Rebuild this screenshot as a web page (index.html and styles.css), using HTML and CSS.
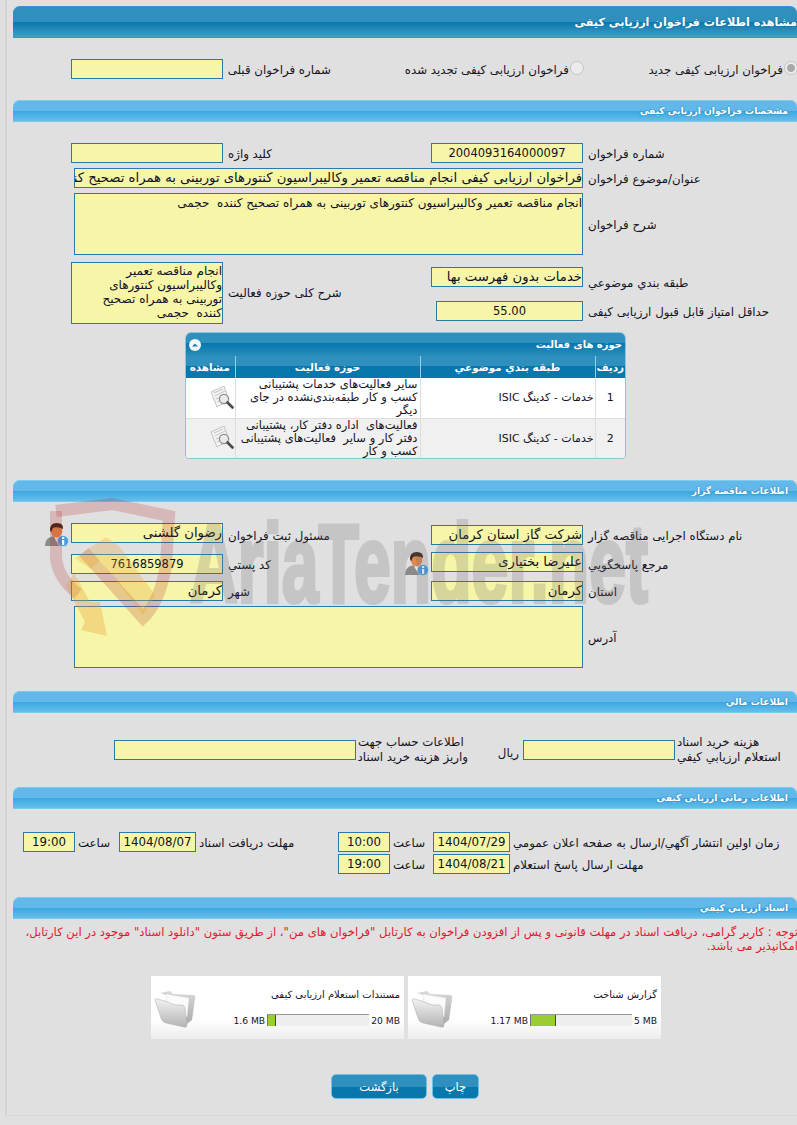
FILE: index.html
```html
<!DOCTYPE html>
<html lang="fa" dir="rtl">
<head>
<meta charset="utf-8">
<title>مشاهده اطلاعات فراخوان ارزیابی کیفی</title>
<link rel="stylesheet" href="styles.css">
</head>
<body>
<svg class="defs" width="0" height="0" aria-hidden="true">
  <defs>
    <linearGradient id="fg" x1="0" y1="0" x2="0" y2="1"><stop offset="0" stop-color="#f2f2f2"/><stop offset="1" stop-color="#b4b4b4"/></linearGradient>
    <linearGradient id="fb" x1="0" y1="0" x2="0" y2="1"><stop offset="0" stop-color="#d8d8d8"/><stop offset="1" stop-color="#a8a8a8"/></linearGradient>
    <symbol id="folder" viewBox="0 0 42 38">
      <path d="M6 3 L16 1 L19 4 L39 5 Q42 5 41 9 L38 30 L30 36 L26 10 Z" fill="url(#fb)"/>
      <path d="M12 4 L35 8 L33 27 L14 24 Z" fill="#fbfbfb" stroke="#ddd" stroke-width=".5"/>
      <path d="M1 10 Q1 8 4 9 L14 12 Q17 14 22 15 L28 15 Q30 15 31 18 L33 35 Q33 38 30 37 L12 33 Q8 32 7 28 Z" fill="url(#fg)" stroke="#aaa" stroke-width=".5"/>
    </symbol>
    <symbol id="doc-search" viewBox="0 0 24 24">
      <path d="M1 6 L14 0 L19 14 L7 21 Z" fill="#f3f3f3" stroke="#b5b5b5" stroke-width=".8"/>
      <path d="M4 7 L13 3 M5 10 L15 5 M6 13 L11 11 M7 16 L11 14" stroke="#c4c4c4" stroke-width="1"/>
      <circle cx="14" cy="13" r="4.6" fill="#e6e9e6" fill-opacity=".8" stroke="#8b8b8b" stroke-width="1.2"/>
      <path d="M17.5 16.5 L22.5 21.5" stroke="#4a4a4a" stroke-width="2.6" stroke-linecap="round"/>
    </symbol>
    <symbol id="person" viewBox="0 0 24 24">
      <path d="M0 23 Q0 15 7 13.5 L17 13.5 Q22 15 22 23 Z" fill="#8a8a8a"/>
      <path d="M9 13.5 L11.5 19 L14 13.5 Z" fill="#f2f2f2"/>
      <ellipse cx="11.5" cy="8" rx="5.8" ry="6.4" fill="#e08a50"/>
      <path d="M5.2 8 Q4.2 0 12 0 Q18.5 0 18 6 Q14 3.5 9 4.5 Q7 5 6.5 9 Z" fill="#3b2a20"/>
      <circle cx="18" cy="18" r="5.6" fill="#4a9ee0" stroke="#cfe6f7" stroke-width=".8"/>
      <rect x="17" y="17" width="2.2" height="5" fill="#fff"/>
      <rect x="17" y="14" width="2.2" height="2" fill="#fff"/>
    </symbol>
  </defs>
</svg>

<div class="page">
  <h1 class="bar bar-main">مشاهده اطلاعات فراخوان ارزیابی کیفی</h1>

  <div class="row row-radios">
    <div class="radio-item"><span class="radio radio-on"></span><span class="radio-text">فراخوان ارزیابی کیفی جدید</span></div>
    <div class="radio-item"><span class="radio"></span><span class="radio-text">فراخوان ارزیابی کیفی تجدید شده</span></div>
    <div class="lbl">شماره فراخوان قبلی</div>
    <div class="field"></div>
  </div>

  <h2 class="bar">مشخصات فراخوان ارزیابی کیفی</h2>
  <div class="body body-spec">
    <div class="row">
      <div class="lbl">شماره فراخوان</div>
      <div class="field center">2004093164000097</div>
      <div class="lbl">کلید واژه</div>
      <div class="field"></div>
    </div>
    <div class="row">
      <div class="lbl">عنوان/موضوع فراخوان</div>
      <div class="field wide">فراخوان ارزیابی کیفی انجام مناقصه تعمیر وکالیبراسیون کنتورهای توربینی به همراه تصحیح کننده  حجمی</div>
    </div>
    <div class="row">
      <div class="lbl">شرح فراخوان</div>
      <div class="field wide area">انجام مناقصه تعمیر وکالیبراسیون کنتورهای توربینی به همراه تصحیح کننده&nbsp; حجمی</div>
    </div>
    <div class="row row-tall">
      <div class="lbl">طبقه بندي موضوعي</div>
      <div class="field field-down">خدمات بدون فهرست بها</div>
      <div class="lbl span2">شرح کلی حوزه فعالیت</div>
      <div class="field area span2 wrap">انجام مناقصه تعمیر وکالیبراسیون کنتورهای توربینی به همراه تصحیح کننده&nbsp; حجمی</div>
      <div class="lbl low-label">حداقل امتیاز قابل قبول ارزیابی کیفی</div>
      <div class="field center field-short">55.00</div>
    </div>
  </div>

  <section class="panel">
    <div class="panel-head">
      <span>حوزه های فعالیت</span>
      <svg class="collapse" viewBox="0 0 12 12"><circle cx="6" cy="6" r="6" fill="#f4f8fb"/><path d="M3 7.5 L6 4.5 L9 7.5 Z" fill="#1f7fb0"/></svg>
    </div>
    <table class="grid">
      <thead>
        <tr><th class="c1">رديف</th><th class="c2">طبقه بندي موضوعي</th><th class="c3">حوزه فعالیت</th><th class="c4">مشاهده</th></tr>
      </thead>
      <tbody>
        <tr>
          <td class="c1 num">1</td>
          <td class="c2">خدمات - کدینگ ISIC</td>
          <td class="c3">سایر فعالیت‌های خدمات پشتیبانی کسب و کار طبقه‌بندی‌نشده در جای دیگر</td>
          <td class="c4"><svg class="view"><use href="#doc-search"/></svg></td>
        </tr>
        <tr class="alt">
          <td class="c1 num">2</td>
          <td class="c2">خدمات - کدینگ ISIC</td>
          <td class="c3">فعالیت‌های&nbsp; اداره دفتر کار، پشتیبانی دفتر کار و سایر&nbsp; فعالیت‌های پشتیبانی کسب و کار</td>
          <td class="c4"><svg class="view"><use href="#doc-search"/></svg></td>
        </tr>
      </tbody>
    </table>
  </section>

  <h2 class="bar bar-tender">اطلاعات مناقصه گزار</h2>
  <div class="body body-tender">
    <div class="row">
      <div class="lbl">نام دستگاه اجرایی مناقصه گزار</div>
      <div class="field drop">شرکت گاز استان کرمان</div>
      <div class="lbl">مسئول ثبت فراخوان</div>
      <div class="with-badge"><div class="field">رضوان گلشنی</div><svg class="badge"><use href="#person"/></svg></div>
    </div>
    <div class="row">
      <div class="lbl">مرجع پاسخگويي</div>
      <div class="with-badge"><div class="field">علیرضا بختیاری</div><svg class="badge"><use href="#person"/></svg></div>
      <div class="lbl">کد پستي</div>
      <div class="field center drop">7616859879</div>
    </div>
    <div class="row row-city">
      <div class="lbl">استان</div>
      <div class="field">کرمان</div>
      <div class="lbl">شهر</div>
      <div class="field">کرمان</div>
    </div>
    <div class="row row-address">
      <div class="lbl">آدرس</div>
      <div class="field wide area"></div>
    </div>
  </div>

  <h2 class="bar">اطلاعات مالي</h2>
  <div class="row row-money">
    <div class="lbl lbl-two">هزینه خرید اسناد<br>استعلام ارزیابي کیفي</div>
    <div class="field"></div>
    <div class="rial">ريال</div>
    <div class="lbl lbl-two">اطلاعات حساب جهت<br>واریز هزینه خرید اسناد</div>
    <div class="field"></div>
  </div>

  <h2 class="bar">اطلاعات زمانی ارزیابی کیفی</h2>
  <div class="body body-time">
    <div class="row row-time">
      <div class="lbl">زمان اولین انتشار آگهي/ارسال به صفحه اعلان عمومي</div>
      <div class="field center">1404/07/29</div>
      <div class="lbl">ساعت</div>
      <div class="field center">10:00</div>
      <div class="lbl">مهلت دریافت اسناد</div>
      <div class="field center">1404/08/07</div>
      <div class="lbl">ساعت</div>
      <div class="field center">19:00</div>
    </div>
    <div class="row row-time">
      <div class="lbl">مهلت ارسال پاسخ استعلام</div>
      <div class="field center">1404/08/21</div>
      <div class="lbl">ساعت</div>
      <div class="field center">19:00</div>
    </div>
  </div>

  <h2 class="bar">اسناد ارزیابي کیفي</h2>
  <p class="notice">توجه : کاربر گرامی، دریافت اسناد در مهلت قانونی و پس از افزودن فراخوان به کارتابل "فراخوان های من"، از طریق ستون "دانلود اسناد" موجود در این کارتابل،<br>امکانپذیر می باشد.</p>

  <div class="cards">
    <div class="card">
      <div class="card-main">
        <div class="card-title">گزارش شناخت</div>
        <div class="usage">
          <span class="size" dir="ltr">5 MB</span>
          <div class="meter" dir="ltr"><div class="meter-fill" style="width:26px"></div></div>
          <span class="size" dir="ltr">1.17 MB</span>
        </div>
      </div>
      <svg class="folder"><use href="#folder"/></svg>
    </div>
    <div class="card">
      <div class="card-main">
        <div class="card-title">مستندات استعلام ارزیابی کیفی</div>
        <div class="usage">
          <span class="size" dir="ltr">20 MB</span>
          <div class="meter" dir="ltr"><div class="meter-fill" style="width:9px"></div></div>
          <span class="size" dir="ltr">1.6 MB</span>
        </div>
      </div>
      <svg class="folder"><use href="#folder"/></svg>
    </div>
  </div>

  <div class="actions">
    <button class="btn btn-print" type="button">چاپ</button>
    <button class="btn btn-back" type="button">بازگشت</button>
  </div>

  <svg class="watermark" viewBox="0 0 797 160" aria-hidden="true">
    <path d="M56 21 L112 14 L169 26 L166 75 Q160 112 143 128 L84 62" fill="none" stroke="#b01818" stroke-opacity=".2" stroke-width="12"/>
    <path d="M56 21 L56 68 Q58 88 78 104" fill="none" stroke="#b01818" stroke-opacity=".2" stroke-width="12"/>
    <path d="M75 68 L106 47 L120 57 L155 105 L143 125 L100 70 L91 79 Z" fill="#e8a030" fill-opacity=".28"/>
    <path d="M74 83 L90 112 L100 112 L107 146 L81 140 L85 132 L66 96 Z" fill="#e8a030" fill-opacity=".32"/>
    <text class="wm-text" x="190" y="112" textLength="458" lengthAdjust="spacingAndGlyphs" direction="ltr" unicode-bidi="bidi-override">AriaTender.net</text>
  </svg>
</div>
</body>
</html>
```
FILE: styles.css
```css
* { box-sizing: border-box; }
html, body { margin: 0; padding: 0; height: 1125px; overflow: hidden; }
body {
  background: #e0e0e0;
  color: #14141e;
  font-family: "DejaVu Sans", Tahoma, sans-serif;
  font-size: 11.8px;
}
.defs { position: absolute; }
.page {
  position: relative;
  margin-left: 5px;
  height: 1116px;
  padding: 6px 0 0 6px;
  border-left: 2px solid #d4d4d4;
  border-bottom: 1px solid #d8d8d8;
  overflow: hidden;
}
.bar {
  margin: 0;
  height: 22px;
  padding: 0 9px 0 0;
  border-radius: 7px 7px 0 0;
  background: linear-gradient(#62b8e8 0, #62b8e8 50%, #3aa7e3 50%, #6cc0ea 100%);
  box-shadow: inset 0 1px #7ecbf0, inset 0 -1px #7cc8ec;
  color: #fff;
  font-size: 9.1px;
  font-weight: bold;
  line-height: 23px;
  text-shadow: 0 0 2px #1d6f9f;
}
.bar-main {
  height: 32px;
  padding: 0;
  border-top: 1px solid #3a90dc;
  border-bottom: 1px solid #3a90dc;
  background: linear-gradient(#2f90bd 0, #2f90bd 50%, #0678ae 50%, #469ec6 100%);
  box-shadow: none;
  font-size: 11.2px;
  line-height: 32px;
}
.bar-tender { margin-top: 21px; }

.row {
  display: grid;
  grid-template-columns: 214px 152px 208px 152px 1fr;
  margin-top: 5px;
}
.row-radios {
  grid-template-columns: 214px 252px 108px 152px 1fr;
  margin: 21px 0;
}
.radio-item {
  display: flex;
  align-items: center;
  gap: 1px;
  height: 20px;
  white-space: nowrap;
  margin-right: -1px;
}
.radio-text { padding-top: 2px; line-height: 18px; }
.radio {
  flex: none;
  width: 14px;
  height: 14px;
  margin-top: -3px;
  border: 1px solid #c4c4c4;
  border-radius: 50%;
  background: #ececec;
}
.radio-on { background: radial-gradient(circle, #a8a8a8 0 3.5px, #ececec 4.5px); }

.lbl {
  align-self: center;
  padding: 2px 0 0 5px;
  text-align: left;
  line-height: 18px;
  white-space: nowrap;
}
.field {
  height: 20px;
  border: 1px solid #2c78a8;
  background: #f6f5a8;
  color: #101020;
  font-size: 13.2px;
  line-height: 18px;
  white-space: nowrap;
  overflow: hidden;
}
.center { text-align: center; font-size: 11.5px; line-height: 18px; }
.wide { grid-column: 2 / span 3; margin-left: 3px; }
.area { height: 62px; padding-top: 1px; white-space: normal; font-size: 12px; line-height: 17px; }
.wrap { line-height: 14px; }
.span2 { grid-row: 1 / span 2; }
.body-spec { padding-top: 16px; }
.row-tall { grid-template-rows: 39px 20px; margin-top: 7px; }
.field-down { margin-top: 5px; }
.low-label { grid-row: 2; grid-column: 1; }
.field-short { grid-row: 2; grid-column: 2; margin-left: 5px; }

.panel {
  width: 441px;
  height: 127px;
  margin: 11px 171px 0 0;
  border: 1px solid #8fc2df;
  border-radius: 6px 6px 4px 4px;
  overflow: hidden;
}
.panel-head {
  display: flex;
  justify-content: space-between;
  align-items: center;
  height: 23px;
  padding: 0 3px;
  background: linear-gradient(#2f90bd 0, #2f90bd 45%, #0678ae 45%, #2a8dba 100%);
  color: #fff;
  font-size: 10px;
  font-weight: bold;
}
.collapse { width: 12px; height: 12px; }
.grid { width: 100%; border-collapse: collapse; table-layout: fixed; }
.grid th {
  height: 22px;
  padding: 0;
  border-left: 1px solid #8fd0f0;
  background: linear-gradient(#2f90bd 0, #2f90bd 45%, #0678ae 45%, #0678ae 100%);
  color: #fff;
  font-size: 10.4px;
  font-weight: bold;
  text-align: center;
}
.grid th:last-child, .grid td:last-child { border-left: 0; }
.grid td {
  height: 40px;
  padding: 0 2px;
  border-left: 1px solid #dedede;
  border-bottom: 1px solid #dedede;
  background: #fff;
  font-size: 11.5px;
  line-height: 13px;
  vertical-align: middle;
  overflow: hidden;
}
.grid td.c2 { font-size: 11px; padding-right: 1px; }
.grid .alt td { background: #f0f0f0; }
.c1 { width: 30px; }
.c2 { width: 175px; }
.c3 { width: 185px; }
.c4 { width: 50px; }
.grid .num { padding: 0; text-align: center; font-size: 11px; }
.grid td.c4 { padding: 0; }
.view { display: block; width: 24px; height: 24px; margin-right: 1px; }

.with-badge { position: relative; }
.badge { position: absolute; top: 0; left: -26px; width: 24px; height: 24px; }
.drop { margin-top: 2px; }
.body-tender { padding: 21px 0 23px; }
.body-tender .row { margin-top: 7px; align-items: start; }
.body-tender .row:first-child { margin-top: 0; }
.body-tender .row > .lbl { align-self: start; padding-top: 4px; }
.body-tender .row-city > .lbl { padding-top: 2px; }
.body-tender .row-address { margin-top: 5px; }
.body-tender .row-address > .lbl { align-self: center; padding-top: 2px; }

.row-money {
  grid-template-columns: 122px 152px 55px 112px 242px 1fr;
  grid-template-rows: 20px;
  margin: 27px 0;
}
.lbl-two { padding: 0 0 0 2px; line-height: 15px; }
.rial { align-self: center; padding: 5px 4px 0 0; }
.body-time { padding: 23px 0; }
.row-time { grid-template-columns: 287px 77px 43px 52px 142px 77px 44px 52px 1fr; margin-top: 2px; }
.row-time:first-child { margin-top: 0; }
.row-time .lbl { padding-left: 3px; }
.row-time .field { font-size: 11.8px; }

.notice {
  margin: 7px -1px 0 0;
  color: #e8142c;
  font-size: 11.6px;
  line-height: 13.5px;
  white-space: nowrap;
}
.cards { display: flex; gap: 4px; margin: 23px 136px 0 0; }
.card {
  display: flex;
  width: 253px;
  height: 63px;
  background: linear-gradient(#fff 0, #fff 68%, #ededed 100%);
}
.card-main { flex: 1; min-width: 0; padding: 12px 4px 0 0; }
.card-title { font-size: 10px; line-height: 13px; }
.usage { display: flex; align-items: center; gap: 2px; margin-top: 13px; }
.size { font-size: 9.2px; white-space: nowrap; }
.meter {
  width: 102px;
  height: 12px;
  border-top: 1px solid #999;
  background: #eee;
}
.meter-fill { height: 100%; background: #9acd32; border-right: 1px solid #444; border-left: 1px solid #777; }
.folder { flex: none; width: 42px; height: 38px; margin: 14px 0 0 3px; }

.actions { display: flex; gap: 5px; margin: 35px 318px 0 0; }
.btn {
  height: 25px;
  padding: 0;
  border: 1px solid #6cc0ea;
  border-radius: 5px;
  background: linear-gradient(#2f90bd 0, #2f90bd 50%, #0678ae 50%, #0678ae 100%);
  color: #fff;
  font-family: inherit;
  font-size: 11.5px;
}
.btn-print { width: 47px; }
.btn-back { width: 96px; }

.watermark {
  position: absolute;
  top: 490px;
  left: -7px;
  width: 797px;
  height: 160px;
  pointer-events: none;
}
.wm-text {
  font-family: "Liberation Sans", sans-serif;
  font-size: 112px;
  font-weight: bold;
  fill: #6a6a6a;
  stroke: #6a6a6a;
  stroke-width: 4px;
  opacity: .22;
}
```
